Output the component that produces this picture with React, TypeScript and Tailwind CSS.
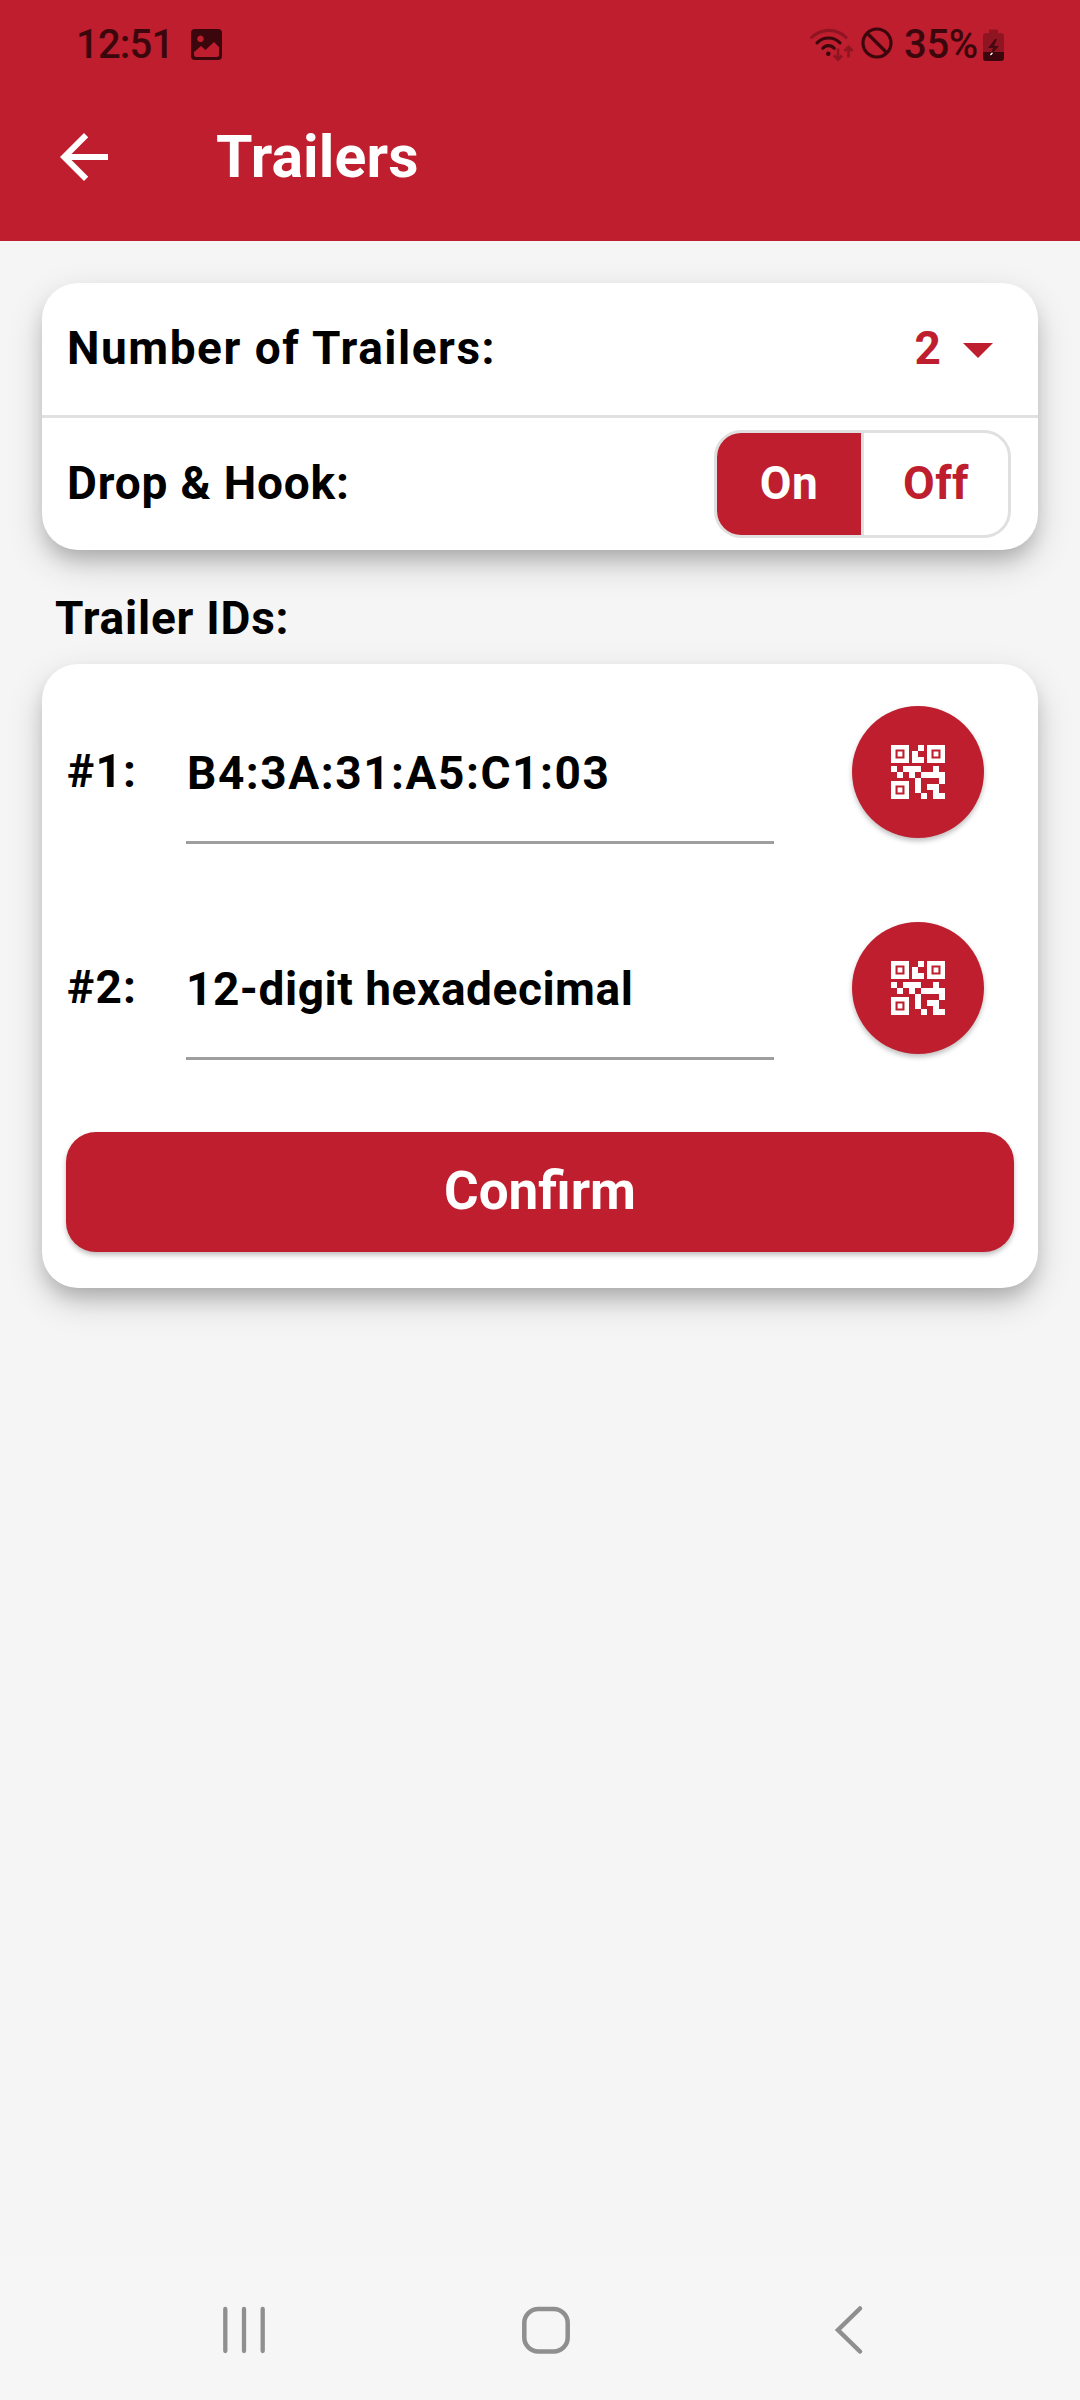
import React from "react";

const RED = "#be1e2d";

function QrIcon() {
  return (
    <svg width="54" height="54" viewBox="0 0 18 18" fill="#fff" fillRule="evenodd">
      {["translate(0 0)", "translate(12 0)", "translate(0 12)"].map((t) => (
        <path key={t} transform={t} d="M0 0h6v6H0zM1.500 1.500v3h3v-3zM2.200 2.200h1.600v1.600H2.200z" />
      ))}
      <path d="M9 0h2v2H9zM7 2h2v2h2v2H7z" />
      <path d="M0 7h2v2H0zM2 9h2v2H2z" />
      <path d="M4 7h6v2h4v2h-4v5H8v-5H6V9H4zM8 9v2h2V9z" fillRule="nonzero" />
      <path d="M14 7h2v2h2v4h-2v-2h-2z" />
      <path d="M12 13h4v3h2v2h-4v-3h-2zM10 16h2v2h-2z" />
    </svg>
  );
}

function TrailerRow({ label, value, spacing }: { label: string; value: string; spacing: string }) {
  return (
    <div className="flex h-[216px] pt-[42px]">
      <div className="flex h-[132px] w-[120px] items-center pb-0.5 pl-px text-[46px] leading-[54px] font-bold tracking-[1.2px]">{label}</div>
      <div className="flex h-[138px] w-[588px] items-center border-b-[3px] border-[#9e9e9e] pb-px">
        <span className={`text-[46px] leading-[54px] font-bold whitespace-nowrap ${spacing}`}>{value}</span>
      </div>
      <button className="ml-[78px] flex size-[132px] items-center justify-center rounded-full bg-[#be1e2d] shadow-[0_3px_5px_rgba(0,0,0,0.25)]">
        <QrIcon />
      </button>
    </div>
  );
}

const cardShadow = "shadow-[0_14px_36px_rgba(0,0,0,0.16),0_12px_20px_-4px_rgba(0,0,0,0.2)]";

export default function App() {
  return (
    <div className="flex h-[2400px] w-[1080px] flex-col bg-[#f5f5f5] font-[Roboto,sans-serif] text-black">
      <header className="h-[241px] bg-[#be1e2d]">
        <div className="flex h-[89px] items-center px-[76px] text-[#3b070d]">
          <span className="text-[40px] leading-[48px] font-medium tracking-[-0.800px]">12:51</span>
          <svg className="ml-[17px]" width="31" height="31" viewBox="0 0 31 31" fill="currentColor" fillRule="evenodd">
            <path d="M4 0h23a4 4 0 0 1 4 4v23a4 4 0 0 1-4 4H4a4 4 0 0 1-4-4V4a4 4 0 0 1 4-4zM9.500 6.500a3.300 3.300 0 1 0 .01 0zM3 23v2.500a2.500 2.500 0 0 0 2.500 2.500h20a2.500 2.500 0 0 0 2.500-2.500V18l-5-5-8.500 8-4.500-4z" />
          </svg>
          <svg className="ml-auto" width="44" height="34" viewBox="0 0 44 34" fill="none" stroke="currentColor" strokeWidth="3.100" strokeLinecap="round">
            <path d="M1.600 9.500c10-9.500 25-9.500 34.400 0" opacity=".35" />
            <path d="M7 14.800c6.500-6.400 16.500-6.400 23 0M12.800 20.300c3.200-3.600 8.200-3.600 11.400 0" />
            <circle cx="18.300" cy="25.700" r="2.300" fill="currentColor" stroke="none" />
            <path d="M28 20.500v10.500M24 27.500l4 4 4-4M38.500 29.500V20M34.500 23l4-4 4 4" opacity=".35" strokeWidth="2.700" strokeLinecap="butt" />
          </svg>
          <svg className="mb-1 ml-[7px]" width="32" height="32" viewBox="0 0 32 32" fill="none" stroke="currentColor" strokeWidth="3.200">
            <circle cx="16" cy="16" r="14" />
            <path d="M6 6l20 20" />
          </svg>
          <span className="ml-[11px] text-[40px] leading-[48px] font-medium tracking-[-0.300px]">35%</span>
          <svg className="ml-[5px]" width="21" height="32" viewBox="0 0 21 32">
            <path d="M6 4V1.500Q6 .5 7 .5h7q1 0 1 1V4h3q3 0 3 3v16H0V7q0-3 3-3z" fill="currentColor" opacity=".35" />
            <path d="M0 23h21v6q0 3-3 3H3q-3 0-3-3z" fill="currentColor" />
            <path d="M12 10L5 19h5l-3 8 9-10h-5l3-7z" fill="currentColor" opacity=".85" />
            <path d="M7.500 26l1-2h1l-1.500 2z" fill="#fff" stroke="#fff" strokeWidth=".8" />
          </svg>
        </div>
        <div className="flex h-[136px] items-center pl-[60px]">
          <svg width="48" height="48" viewBox="4 4 16 16" fill="#fff">
            <path d="M20 11H7.830l5.590-5.590L12 4l-8 8 8 8 1.410-1.410L7.830 13H20v-2z" />
          </svg>
          <h1 className="ml-[108px] text-[59px] leading-[70px] font-bold tracking-[0.1px] text-white">Trailers</h1>
        </div>
      </header>

      <main className="flex-1 px-[42px] pt-[42px]">
        <section className={`rounded-[36px] bg-white ${cardShadow}`}>
          <div className="flex h-[132px] items-center justify-between pr-[45px] pb-[3px] pl-[25px]">
            <span className="text-[46px] leading-[54px] font-bold tracking-[1.530px]">Number of Trailers:</span>
            <div className="flex items-center gap-[22px] text-[#be1e2d]">
              <span className="text-[46px] leading-[54px] font-bold">2</span>
              <svg className="mt-1.5" width="30" height="15" viewBox="0 0 30 15" fill={RED}><path d="M0 0h30L15 15z" /></svg>
            </div>
          </div>
          <div className="h-[3px] bg-[#e0e0e0]" />
          <div className="flex h-[132px] items-center justify-between pr-[27px] pl-[25px]">
            <span className="pb-[3px] text-[46px] leading-[54px] font-bold tracking-[0.820px]">Drop &amp; Hook:</span>
            <div className="flex h-[108px] w-[297px] overflow-hidden rounded-[27px] border-[3px] border-[#e0e0e0] text-[46px] leading-[54px] font-bold tracking-[0.400px]">
              <button className="flex w-[144px] items-center justify-center bg-[#be1e2d] pb-[3px] text-white">On</button>
              <button className="flex w-[147px] items-center justify-center border-l-[3px] border-[#e0e0e0] pb-[3px] text-[#be1e2d]">Off</button>
            </div>
          </div>
        </section>

        <h2 className="flex h-[114px] items-center pt-[22px] pl-[13px] text-[46px] leading-[54px] font-bold tracking-[0.770px]">Trailer IDs:</h2>

        <section className={`h-[624px] rounded-[36px] bg-white px-6 ${cardShadow}`}>
          <TrailerRow label="#1:" value="B4:3A:31:A5:C1:03" spacing="pl-px tracking-[1.540px]" />
          <TrailerRow label="#2:" value="12-digit hexadecimal" spacing="tracking-[0.540px]" />
          <button className="mt-9 flex h-[120px] w-full items-center justify-center rounded-[30px] bg-[#be1e2d] pb-[3px] text-[53px] leading-[62px] font-bold text-white shadow-[0_3px_5px_rgba(0,0,0,0.25)]">
            Confirm
          </button>
        </section>
      </main>

      <nav className="flex h-[144px] items-start bg-[#f6f6f6] pt-[48px] pl-[223px]">
        <svg width="42" height="50" viewBox="0 0 42 50" stroke="#8f8f8f" strokeWidth="4.300" strokeLinecap="round">
          <path d="M2.300 5v42M21 5v42M39.700 5v42" />
        </svg>
        <svg className="ml-[257px]" width="48" height="52" viewBox="0 0 48 52" fill="none" stroke="#8f8f8f" strokeWidth="4.500">
          <rect x="2.300" y="5" width="43.400" height="42.500" rx="14" />
        </svg>
        <svg className="ml-[264px]" width="30" height="52" viewBox="0 0 30 52" fill="none" stroke="#8f8f8f" strokeWidth="4.500" strokeLinecap="round">
          <path d="M26 4.500L4 26l22 21.500" />
        </svg>
      </nav>
    </div>
  );
}
